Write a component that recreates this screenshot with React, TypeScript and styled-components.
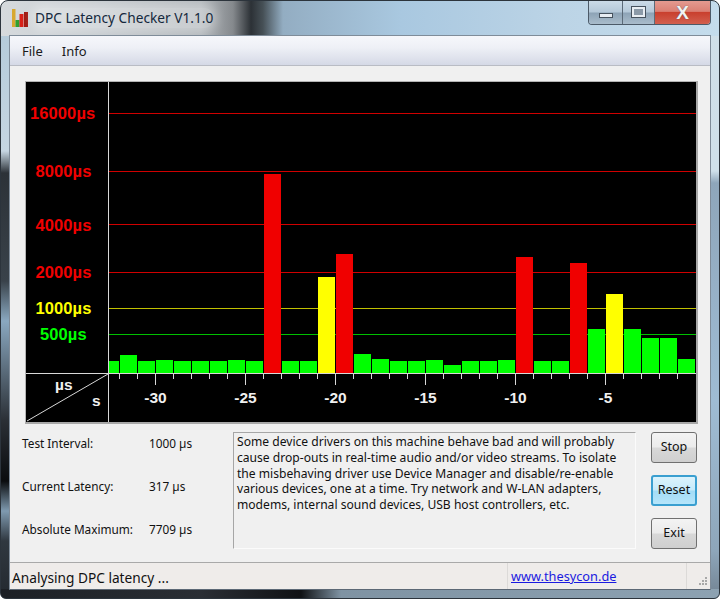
import React from 'react';
import styled, { createGlobalStyle } from 'styled-components';

const GlobalStyle = createGlobalStyle`
  html, body {
    margin: 0;
    padding: 0;
    background: #ffffff;
  }
`;

const uiFont = `"Noto Sans", "Open Sans", sans-serif`;

const Window = styled.div`
  box-sizing: border-box;
  width: 720px;
  height: 599px;
  display: flex;
  flex-direction: column;
  padding: 0 9px 8px 9px;
  border: 1px solid #2c343c;
  border-radius: 8px 8px 6px 6px;
  overflow: hidden;
  font-family: ${uiFont};
  background:
    linear-gradient(90deg, #1c2025 0, #2a2e34 200px, #101215 300px, #7f93a3 340px, #8da2b2 720px) left bottom / 100% 9px no-repeat,
    linear-gradient(90deg, #d6dadd 0, #c8cdd1 90px, #b4b9bd 200px, #85898d 232px, #2c3136 250px, #465056 262px, #93adc2 282px, #a9c8e0 400px, #bcd4e6 560px, #c4dcec 720px) left top / 100% 35px no-repeat,
    linear-gradient(180deg, #b0c8d8 0, #c6d6e2 150px, #2c3238 172px, #39424a 280px, #8aa8c0 320px, #2a2f35 420px, #0a0c0e 480px, #7f9ab0 510px, #303840 540px, #22282e 600px) left top / 9px 100% no-repeat,
    linear-gradient(180deg, #d0dfe8 0, #cfe0ea 170px, #8ea6ba 182px, #9fbcd4 400px, #8ea6ba 550px, #70808f 600px) right top / 9px 100% no-repeat,
    #a9c8e0;
`;

const TitleBar = styled.div`
  height: 34px;
  flex: none;
  display: flex;
  align-items: flex-start;
`;

const AppIcon = styled.svg`
  width: 18px;
  height: 19px;
  margin: 8px 6px 0 1px;
  flex: none;
`;

const Title = styled.span`
  margin-top: 7px;
  font-size: 13.7px;
  line-height: 20px;
  color: #14283c;
  background: rgba(255, 255, 255, 0.28);
  box-shadow: 0 0 10px 4px rgba(255, 255, 255, 0.28);
  border-radius: 8px;
  white-space: nowrap;
`;

const CaptionButtons = styled.div`
  margin-left: auto;
  margin-right: -1px;
  height: 23px;
  display: flex;
  border: 1px solid #4c5a68;
  border-top: none;
  border-radius: 0 0 4px 4px;
  overflow: hidden;
`;

const CaptionButton = styled.div<{ $close?: boolean; $width: number }>`
  box-sizing: border-box;
  width: ${p => p.$width}px;
  display: flex;
  align-items: center;
  justify-content: center;
  border-left: 1px solid #5b6a78;
  background: ${p => p.$close
    ? 'linear-gradient(180deg, #e39a90 0%, #da8074 45%, #c9402e 50%, #d2604f 100%)'
    : 'linear-gradient(180deg, #cbdbe8 0%, #b4c8d8 48%, #8da3b6 52%, #a9bccb 100%)'};
  &:first-child {
    border-left: none;
  }
`;

const MinGlyph = styled.div`
  width: 12px;
  height: 3px;
  margin-top: 5px;
  background: #e6ecf2;
  border: 1px solid #46525e;
`;

const MaxGlyph = styled.div`
  box-sizing: border-box;
  width: 13px;
  height: 10px;
  margin-bottom: 2px;
  background: #8b9aa8;
  border: 2px solid #e8eef3;
  outline: 1px solid #46525e;
`;

const CloseGlyph = styled.span`
  font-family: "Liberation Sans", sans-serif;
  font-size: 19px;
  font-weight: bold;
  line-height: 17px;
  color: #f2f2f2;
  text-shadow: 0 0 1px #444444;
`;

const Client = styled.div`
  flex: 1;
  min-height: 0;
  display: flex;
  flex-direction: column;
  background: #f0f0f0;
  border: 1px solid #7f8c99;
  border-bottom: 1px solid #5c6875;
  margin: 0 -1px 0 -1px;
`;

const MenuBar = styled.div`
  height: 29px;
  flex: none;
  display: flex;
  gap: 19px;
  align-items: center;
  padding-left: 12px;
  font-size: 13px;
  color: #1a1a1a;
  background: linear-gradient(180deg, #f6f7fb 0%, #eef0f6 40%, #d5d9e6 100%);
  border-bottom: 1px solid #b9bcc4;
`;

const Main = styled.div`
  flex: 1;
  min-height: 0;
  padding: 15px 13px 0 12px;
`;

const ChartFrame = styled.div`
  width: 670px;
  height: 340px;
  margin: 0 0 8px 3px;
  background: #000000;
  border-left: 1px solid #b4b4b4;
  border-top: 1px solid #b4b4b4;
  border-right: 2px solid #a8a8a8;
  border-bottom: 2px solid #a8a8a8;
`;

const ChartSvg = styled.svg`
  display: block;
`;

const InfoRow = styled.div`
  display: flex;
`;

const Readouts = styled.div`
  width: 211px;
  flex: none;
  display: grid;
  grid-template-columns: 127px 1fr;
  grid-auto-rows: 22px;
  row-gap: 21px;
  align-items: center;
  font-size: 11.8px;
  color: #111111;
`;

const Notice = styled.div`
  box-sizing: border-box;
  width: 403px;
  height: 117px;
  flex: none;
  margin-right: 15px;
  padding: 1px 0 0 3px;
  border-top: 1px solid #a6a6a6;
  border-left: 1px solid #a6a6a6;
  border-right: 1px solid #fbfbfb;
  border-bottom: 1px solid #fbfbfb;
  font-size: 12.1px;
  line-height: 15.75px;
  color: #111111;
  white-space: pre;
`;

const Buttons = styled.div`
  width: 46px;
  flex: none;
  display: flex;
  flex-direction: column;
  gap: 12px;
`;

const PushButton = styled.button<{ $focused?: boolean }>`
  height: 31px;
  padding: 0 0 2px;
  font-family: ${uiFont};
  font-size: 12.5px;
  color: #111111;
  border-radius: 3px;
  border: ${p => (p.$focused ? '2px solid #3a9fd0' : '1px solid #707070')};
  background: ${p => p.$focused
    ? 'linear-gradient(180deg, #dcf3fc 0%, #c6eafa 48%, #a3dcf6 52%, #b6e5fa 100%)'
    : 'linear-gradient(180deg, #f3f3f3 0%, #ebebeb 48%, #d8d8d8 52%, #cfcfcf 100%)'};
`;

const StatusBar = styled.div`
  height: 26px;
  flex: none;
  display: flex;
  align-items: center;
  border-top: 1px solid #a9a9a9;
  background: #efecea;
  font-size: 13.7px;
  color: #111111;
`;

const StatusText = styled.div`
  width: 497px;
  flex: none;
  padding: 2px 0 0 2px;
  box-sizing: border-box;
  white-space: nowrap;
`;

const StatusLink = styled.a`
  flex: 1;
  height: 100%;
  display: flex;
  align-items: center;
  padding-left: 3px;
  border-left: 1px solid #dcdad8;
  border-right: 1px solid #dcdad8;
  font-size: 12.75px;
  color: #1a1ae0;
  text-decoration: underline;
`;

const Grip = styled.svg`
  width: 23px;
  height: 26px;
  flex: none;
`;

const gridLines = [
  { y: 113.5, color: '#d00000' },
  { y: 171.5, color: '#d00000' },
  { y: 224.5, color: '#d00000' },
  { y: 272.5, color: '#d00000' },
  { y: 308.5, color: '#c0c000' },
  { y: 334.5, color: '#00c000' },
];

const scaleLabels = [
  { text: '16000µs', x: 30, y: 119, color: '#f00000' },
  { text: '8000µs', x: 35.5, y: 177, color: '#f00000' },
  { text: '4000µs', x: 35.5, y: 231, color: '#f00000' },
  { text: '2000µs', x: 35.5, y: 278, color: '#f00000' },
  { text: '1000µs', x: 35.5, y: 314, color: '#ffff00' },
  { text: '500µs', x: 40, y: 340, color: '#00ff00' },
];

const barTops = [
  355, 361, 360, 361, 361, 361, 360, 361, 174, 361, 361, 277, 254, 354, 359, 361,
  361, 360, 365, 361, 361, 360, 257, 361, 361, 263, 329, 294, 329, 338, 338, 359,
];

const barColor = (top: number) => {
  if (top === 277 || top === 294) return '#ffff00';
  if (top < 280) return '#f00000';
  return '#00ff00';
};

const ticks = Array.from({ length: 32 }, (_, i) => 119.5 + i * 18);
const majors = [155.5, 245.5, 335.5, 425.5, 515.5, 605.5];
const axisLabels = ['-30', '-25', '-20', '-15', '-10', '-5'];

const Chart = () => (
  <ChartSvg width="670" height="340" viewBox="26 82 670 340">
    {gridLines.map(l => (
      <line key={l.y} x1="108" x2="696" y1={l.y} y2={l.y} stroke={l.color} />
    ))}
    <rect x="109" y="361" width="10" height="12" fill="#00ff00" />
    {barTops.map((top, i) => (
      <rect key={i} x={120 + i * 18} y={top} width="17" height={373 - top} fill={barColor(top)} />
    ))}
    <line x1="108.5" x2="108.5" y1="82" y2="422" stroke="#d8d8d8" />
    <line x1="26" x2="696" y1="373.5" y2="373.5" stroke="#d8d8d8" />
    <line x1="108" y1="374" x2="27" y2="421" stroke="#d8d8d8" />
    {ticks.map(x => (
      <line key={x} x1={x} x2={x} y1="374" y2={majors.includes(x) ? 385 : 379} stroke="#d8d8d8" />
    ))}
    {scaleLabels.map(l => (
      <text key={l.text} x={l.x} y={l.y} fill={l.color} fontFamily="Liberation Sans" fontWeight="bold" fontSize="16.5" letterSpacing="0.1">
        {l.text}
      </text>
    ))}
    <text x="55" y="390" fill="#f0f0f0" fontFamily="Liberation Sans" fontWeight="bold" fontSize="15.5">µs</text>
    <text x="92" y="406" fill="#f0f0f0" fontFamily="Liberation Sans" fontWeight="bold" fontSize="15.5">s</text>
    {axisLabels.map((t, i) => (
      <text key={t} x={majors[i]} y="403" textAnchor="middle" fill="#f0f0f0" fontFamily="Liberation Sans" fontWeight="bold" fontSize="15.5">
        {t}
      </text>
    ))}
  </ChartSvg>
);

const notice = `Some device drivers on this machine behave bad and will probably
cause drop-outs in real-time audio and/or video streams. To isolate
the misbehaving driver use Device Manager and disable/re-enable
various devices, one at a time. Try network and W-LAN adapters,
modems, internal sound devices, USB host controllers, etc.`;

const App = () => (
  <>
    <GlobalStyle />
    <Window>
      <TitleBar>
        <AppIcon viewBox="0 0 18 19">
          <rect x="1" y="0" width="3.5" height="18" fill="#d8a830" />
          <rect x="4.5" y="11" width="4" height="7" fill="#30a030" />
          <rect x="8.5" y="5" width="4" height="13" fill="#d82018" />
          <rect x="13" y="3" width="4" height="15" fill="#a01810" />
        </AppIcon>
        <Title>DPC Latency Checker V1.1.0</Title>
        <CaptionButtons>
          <CaptionButton $width={33}><MinGlyph /></CaptionButton>
          <CaptionButton $width={32}><MaxGlyph /></CaptionButton>
          <CaptionButton $width={56} $close><CloseGlyph>X</CloseGlyph></CaptionButton>
        </CaptionButtons>
      </TitleBar>
      <Client>
        <MenuBar>
          <span>File</span>
          <span>Info</span>
        </MenuBar>
        <Main>
          <ChartFrame>
            <Chart />
          </ChartFrame>
          <InfoRow>
            <Readouts>
              <span>Test Interval:</span>
              <span>1000 µs</span>
              <span>Current Latency:</span>
              <span>317 µs</span>
              <span>Absolute Maximum:</span>
              <span>7709 µs</span>
            </Readouts>
            <Notice>{notice}</Notice>
            <Buttons>
              <PushButton>Stop</PushButton>
              <PushButton $focused>Reset</PushButton>
              <PushButton>Exit</PushButton>
            </Buttons>
          </InfoRow>
        </Main>
        <StatusBar>
          <StatusText>Analysing DPC latency ...</StatusText>
          <StatusLink href="#">www.thesycon.de</StatusLink>
          <Grip viewBox="0 0 23 26">
            <g fill="#a8a8a8">
              <rect x="18" y="14" width="2" height="2" />
              <rect x="15" y="17" width="2" height="2" />
              <rect x="18" y="17" width="2" height="2" />
              <rect x="12" y="20" width="2" height="2" />
              <rect x="15" y="20" width="2" height="2" />
              <rect x="18" y="20" width="2" height="2" />
            </g>
          </Grip>
        </StatusBar>
      </Client>
    </Window>
  </>
);

export default App;
